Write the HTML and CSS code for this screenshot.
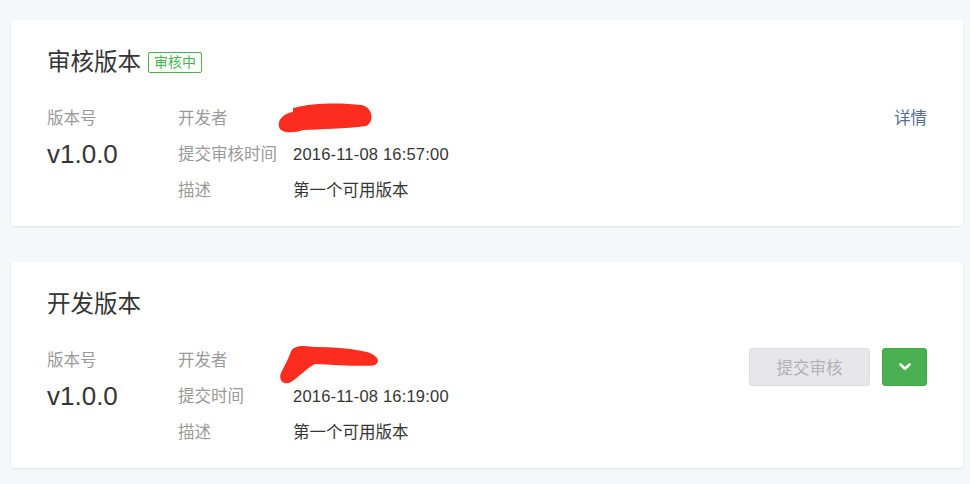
FILE: index.html
```html
<!DOCTYPE html>
<html lang="zh-CN">
<head>
    <meta charset="UTF-8">
    <title>版本管理</title>
    <link rel="stylesheet" href="styles.css">
</head>
<body>
    <div class="page">
        <!-- 审核版本 -->
        <div class="card">
            <h2 class="card-title">审核版本 <span class="badge">审核中</span></h2>
            <div class="card-body">
                <div class="version">
                    <div class="label">版本号</div>
                    <div class="version-num">v1.0.0</div>
                </div>
                <div class="info">
                    <div class="label">开发者</div>
                    <div class="value masked">
                        <svg class="scribble" width="104" height="40" viewBox="0 0 104 40">
                            <path d="M18 7 C40 1 70 2 86 4 C98 6 100 21 91 25 C70 28 45 28 28 29 C20 32 6 33 4 26 C2 18 10 12 18 11 Z" fill="#fc2c1e"/>
                        </svg>
                    </div>
                    <div class="label">提交审核时间</div>
                    <div class="value date">2016-11-08 16:57:00</div>
                    <div class="label">描述</div>
                    <div class="value">第一个可用版本</div>
                </div>
                <div class="actions">
                    <a class="link" href="#">详情</a>
                </div>
            </div>
        </div>

        <!-- 开发版本 -->
        <div class="card">
            <h2 class="card-title">开发版本</h2>
            <div class="card-body">
                <div class="version">
                    <div class="label">版本号</div>
                    <div class="version-num">v1.0.0</div>
                </div>
                <div class="info">
                    <div class="label">开发者</div>
                    <div class="value masked">
                        <svg class="scribble scribble-2" width="106" height="40" viewBox="0 0 106 40">
                            <path d="M17 3 C25 -1 32 2 40 2 C55 2 70 3 85 6 C99 8 105 16 98 20 C90 22 60 20 38 19 C31 22 23 31 14 37 C7 41 1 35 4 28 C7 21 11 15 13 9 C14 6 15 4 17 3 Z" fill="#fc2c1e"/>
                        </svg>
                    </div>
                    <div class="label">提交时间</div>
                    <div class="value date">2016-11-08 16:19:00</div>
                    <div class="label">描述</div>
                    <div class="value">第一个可用版本</div>
                </div>
                <div class="actions">
                    <button class="btn btn-disabled" disabled>提交审核</button>
                    <button class="btn btn-green">
                        <svg width="14" height="10" viewBox="0 0 14 10">
                            <path d="M2.5 2.5 L7 6.8 L11.5 2.5" stroke="#fff" stroke-width="2.6" fill="none" stroke-linecap="round" stroke-linejoin="round"/>
                        </svg>
                    </button>
                </div>
            </div>
        </div>
    </div>
</body>
</html>
```

FILE: styles.css
```css
body {
    margin: 0;
    background: #f6f7f9;
    font-family: "Liberation Sans", "Noto Sans CJK SC", sans-serif;
    color: #353535;
}
.page {
    padding: 20px 7px 16px 11px;
    display: flex;
    flex-direction: column;
    gap: 36px;
}
.card {
    background: #fff;
    border-radius: 4px;
    box-shadow: 0 1px 2px rgba(0, 0, 0, 0.09);
    padding: 27px 36px 18px 36px;
}
.card-title {
    margin: 0;
    font-size: 23.5px;
    font-weight: normal;
    line-height: 30px;
    display: flex;
    align-items: center;
}
.badge {
    margin-left: 7px;
    font-size: 14px;
    line-height: 19px;
    padding: 0 5px;
    border: 1px solid #44b549;
    border-radius: 2px;
    color: #44b549;
}
.card-body {
    display: flex;
    margin-top: 23px;
}
.version {
    width: 131px;
}
.label {
    font-size: 16.5px;
    line-height: 36px;
    color: #9a9a9a;
}
.version-num {
    font-size: 26px;
    line-height: 36px;
}
.info {
    display: grid;
    grid-template-columns: 115px auto;
    font-size: 16.5px;
    line-height: 36px;
    flex: 1;
    align-content: start;
}
.value {
    color: #353535;
}
.date {
    letter-spacing: 0.2px;
}
.masked {
    position: relative;
}
.scribble {
    position: absolute;
    left: -18px;
    top: 1px;
}
.scribble-2 {
    top: 3px;
    left: -16px;
}
.actions {
    display: flex;
    gap: 12px;
    align-items: flex-start;
}
.link {
    font-size: 16.5px;
    line-height: 36px;
    color: #576b95;
    text-decoration: none;
}
.btn {
    height: 38px;
    border-radius: 3px;
    font-family: inherit;
    font-size: 16.5px;
    margin-top: 6px;
    padding: 0;
}
.btn-disabled {
    width: 121px;
    background: #e7e7eb;
    border: 1px solid #dddde1;
    color: #b0b0b5;
}
.btn-green {
    width: 45px;
    background: #4bb052;
    border: 1px solid #43a84a;
    display: flex;
    align-items: center;
    justify-content: center;
}
```
